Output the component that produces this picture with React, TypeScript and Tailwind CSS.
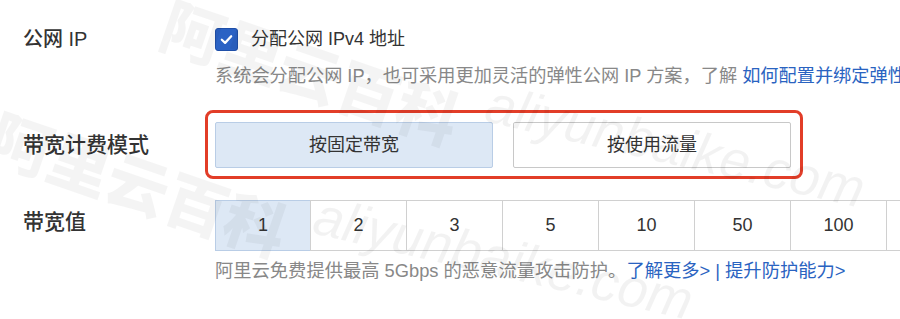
import React from "react";

const cells = ["1", "2", "3", "5", "10", "50", "100", "200"];

function Watermark({ x, y }: { x: number; y: number }) {
  return (
    <>
      <div
        className="absolute whitespace-nowrap text-[62px] font-black leading-none text-[rgba(0,0,0,0.045)]"
        style={{ left: x, top: y, transform: "rotate(19deg)", transformOrigin: "0 0", fontFamily: '"Noto Sans CJK SC", sans-serif' }}
      >
        阿里云百科
      </div>
      <div
        className="absolute whitespace-nowrap text-[54px] italic leading-none text-[rgba(0,0,0,0.05)]"
        style={{ left: x + 318, top: y + 86, transform: "rotate(13deg)", transformOrigin: "0 0", fontFamily: '"Liberation Sans", sans-serif' }}
      >
        aliyunbaike.com
      </div>
    </>
  );
}

export default function App() {
  return (
    <div
      className="relative h-[319px] w-[900px] overflow-hidden bg-white text-[#333]"
      style={{ fontFamily: '"Liberation Sans", "Noto Sans CJK SC", sans-serif' }}
    >
      <div className="flex flex-col pl-[23px] pt-[27px]">
        {/* Row 1 */}
        <div className="flex">
          <div className="w-[192px] shrink-0 text-[20px] font-medium leading-[24px]">公网 IP</div>
          <div className="flex min-w-0 flex-col">
            <div className="flex items-center gap-[13px]">
              <div className="flex h-[23px] w-[23px] shrink-0 items-center justify-center rounded-[3px] border border-[#1f4fa8] bg-[#2b62c4]">
                <svg width="15" height="15" viewBox="0 0 16 16" fill="none">
                  <path d="M3 8.3 L6.5 11.6 L13 4.6" stroke="white" strokeWidth="2.4" strokeLinecap="round" strokeLinejoin="round" />
                </svg>
              </div>
              <span className="whitespace-nowrap text-[18px] leading-[24px]">分配公网 IPv4 地址</span>
            </div>
            <div className="mt-[13px] whitespace-nowrap text-[18.2px] leading-[24px] text-[#888]">
              系统会分配公网 IP，也可采用更加灵活的弹性公网 IP 方案，了解{" "}
              <span className="text-[#2a63c1]">如何配置并绑定弹性公网 IP</span>
            </div>
          </div>
        </div>

        {/* Row 2 */}
        <div className="mt-[34px] flex items-center">
          <div className="w-[192px] shrink-0 text-[21px] font-medium leading-[24px]">带宽计费模式</div>
          <div className="relative flex gap-[20px]">
            <div className="pointer-events-none absolute -bottom-[11px] -left-[10px] -right-[12px] -top-[12px] rounded-[8px] border-[3px] border-[#e23d28]" />
            <div className="flex h-[46px] w-[278px] items-center justify-center rounded-[2px] border border-[#b9cde6] bg-[#dde8f5] text-[18px]">
              按固定带宽
            </div>
            <div className="flex h-[46px] w-[278px] items-center justify-center rounded-[2px] border border-[#c8c8c8] bg-white text-[18px]">
              按使用流量
            </div>
          </div>
        </div>

        {/* Row 3 */}
        <div className="mt-[32px] flex">
          <div className="w-[192px] shrink-0 pt-[10px] text-[21px] font-medium leading-[24px]">带宽值</div>
          <div className="flex min-w-0 flex-col">
            <div className="flex">
              {cells.map((c, i) => (
                <div
                  key={c}
                  className={
                    i === 0
                      ? "flex h-[51px] w-[96px] shrink-0 items-center justify-center border border-[#b9cde6] bg-[#dde8f5] text-[18px]"
                      : "-ml-px flex h-[51px] w-[97px] shrink-0 items-center justify-center border border-[#d0d0d0] bg-white text-[18px]"
                  }
                >
                  {c}
                </div>
              ))}
            </div>
            <div className="mt-[8px] whitespace-nowrap text-[18.3px] leading-[24px] text-[#888]">
              阿里云免费提供最高 5Gbps 的恶意流量攻击防护。
              <span className="text-[#2a63c1]">了解更多&gt; | 提升防护能力&gt;</span>
            </div>
          </div>
        </div>
      </div>

      <div className="pointer-events-none absolute inset-0">
        <Watermark x={175} y={-10} />
        <Watermark x={3} y={102} />
      </div>
    </div>
  );
}
